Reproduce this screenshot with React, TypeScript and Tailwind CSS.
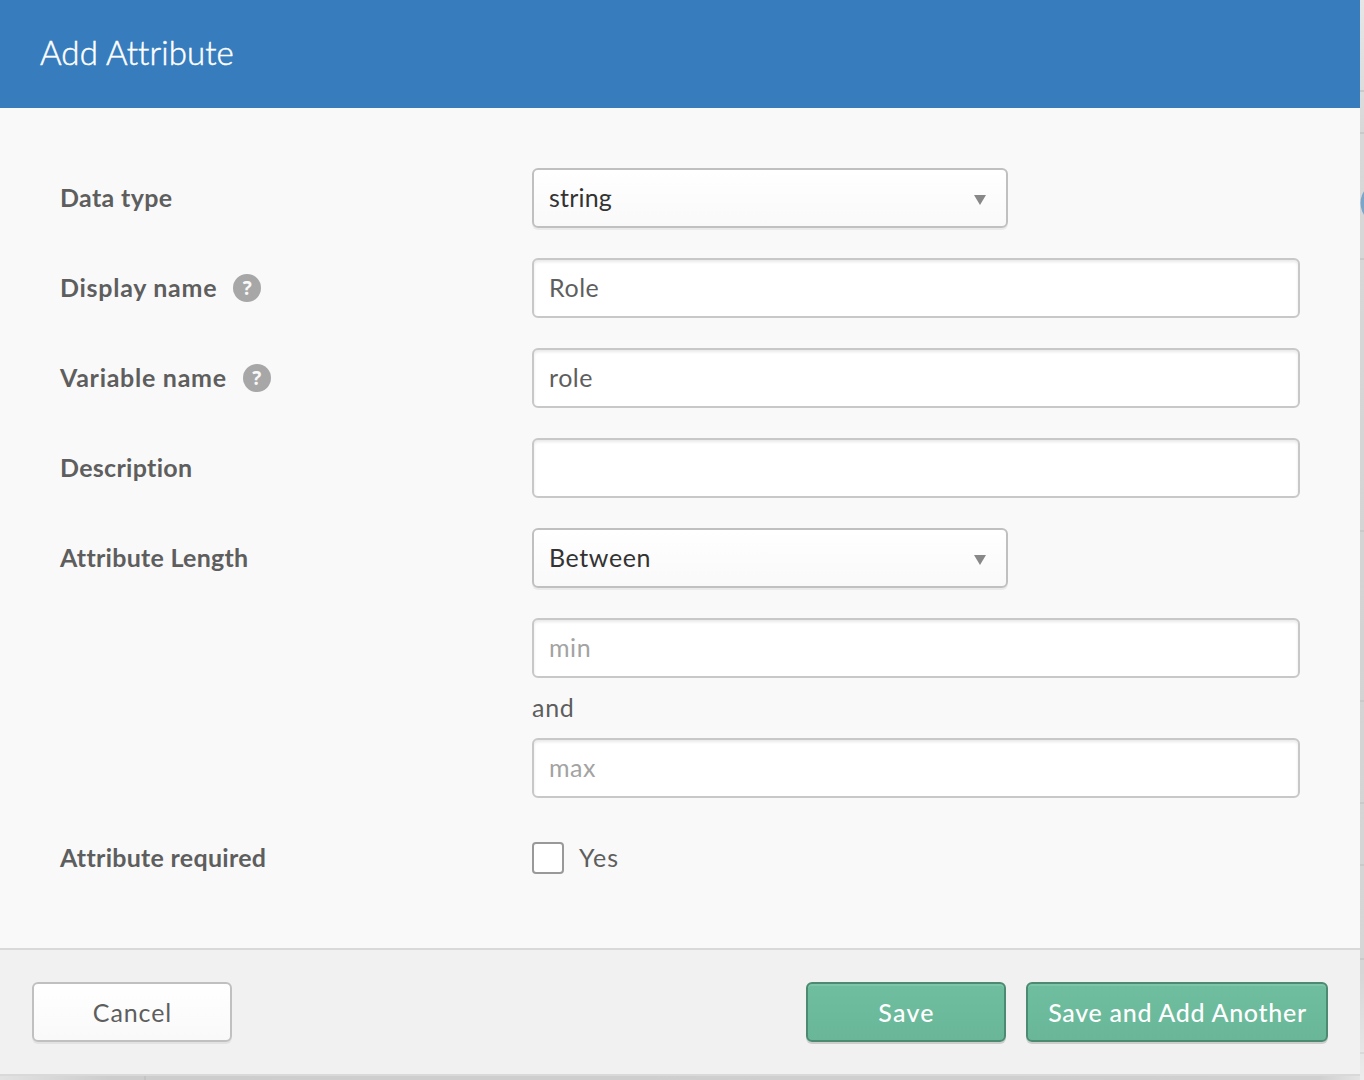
import React, { useState } from 'react';

interface RowProps {
  label: string;
  labelClass: string;
  help?: boolean;
  children: React.ReactNode;
}

const fieldClass =
  'block w-full h-[60px] rounded-[6px] border-2 border-[#c8c8c8] bg-white px-[15px] pb-[2px] text-[25px] tracking-[0.55px] text-[#5e5e5e] placeholder:text-[#a3a3a3] placeholder:opacity-100 shadow-[inset_0_2px_3px_rgba(0,0,0,0.09)] outline-none';

const greenButton =
  'h-[60px] rounded-[6px] border-2 border-[#4c8b72] bg-linear-to-b from-[#6ebe9f] to-[#69b798] pt-[2px] text-[25px] font-medium text-white whitespace-nowrap shadow-[0_2px_0_rgba(0,0,0,0.15),inset_0_2px_0_rgba(255,255,255,0.12)]';

function Row({ label, labelClass, help, children }: RowProps) {
  return (
    <div className="flex items-start">
      <div className="flex h-[60px] w-[472px] shrink-0 items-center gap-4 text-[25px] font-bold text-[#5e5e5e]">
        <span className={labelClass}>{label}</span>
        {help && (
          <span className="flex h-7 w-7 items-center justify-center rounded-full bg-[#a7a7a7] font-['Open_Sans',sans-serif] text-[19px] leading-none font-bold text-[#f9f9f9]">
            ?
          </span>
        )}
      </div>
      <div className="min-w-0 flex-1">{children}</div>
    </div>
  );
}

function Dropdown({ value, valueClass }: { value: string; valueClass: string }) {
  return (
    <button className="flex h-[60px] w-[476px] items-center justify-between rounded-[6px] border-2 border-[#c0c0c0] bg-linear-to-b from-white to-[#f9f9f9] pl-[15px] pr-5 text-[25px] text-[#333] shadow-[0_2px_0_rgba(0,0,0,0.06)]">
      <span className={valueClass}>{value}</span>
      <svg width="12" height="10" viewBox="0 0 12 10" className="mt-[3px]">
        <path d="M0 0h12L6 10z" fill="#888" />
      </svg>
    </button>
  );
}

export default function App() {
  const [displayName, setDisplayName] = useState('Role');
  const [variableName, setVariableName] = useState('role');
  const [description, setDescription] = useState('');
  const [required, setRequired] = useState(false);

  return (
    <div className="relative h-[1080px] w-[1364px] overflow-hidden bg-[#d5d5d5] font-['Lato',sans-serif] [font-variant-ligatures:none]">
      {/* edge of the page behind the dialog */}
      <svg width="1364" height="1080" className="absolute inset-0">
        <defs>
          <linearGradient id="side" x1="0" y1="0" x2="0" y2="1">
            <stop offset="0" stopColor="#e6e6e6" />
            <stop offset="0.12" stopColor="#d8d8d8" />
            <stop offset="0.6" stopColor="#d3d3d3" />
            <stop offset="0.9" stopColor="#d6d6d6" />
            <stop offset="1" stopColor="#ececec" />
          </linearGradient>
          <linearGradient id="bottom" x1="0" y1="0" x2="1" y2="0">
            <stop offset="0" stopColor="#e2e2e2" />
            <stop offset="0.08" stopColor="#cdcdcd" />
            <stop offset="0.97" stopColor="#d0d0d0" />
            <stop offset="1" stopColor="#e4e4e4" />
          </linearGradient>
        </defs>
        <rect x="1360" width="4" height="1080" fill="url(#side)" />
        <rect y="1074" width="1360" height="6" fill="url(#bottom)" />
        <path d="M1360 91h4M1360 133h4M1360 259h4M1360 531h4M1360 701h4M1360 803h4M1360 865h4M1360 959h4" stroke="#c9c9c9" strokeWidth="2" />
        <path d="M1360 1053h4" stroke="#d9d9d9" strokeWidth="2" />
        <path d="M145 1076v4" stroke="#c4c4c4" strokeWidth="2" />
        <circle cx="1382" cy="203" r="21.5" fill="#7ba5c9" />
      </svg>

      <div className="relative flex h-[1076px] w-[1360px] flex-col border-b-2 border-[#d9d9d9] bg-[#f9f9f9]">
        <header className="flex h-[108px] shrink-0 items-center bg-[#377dbd] px-10 pb-[3px]">
          <h1 className="text-[33px] font-light tracking-[0.1px] text-white [-webkit-text-stroke:0.5px_white]">Add Attribute</h1>
        </header>

        <main className="flex flex-1 flex-col gap-[30px] px-[60px] pt-[60px]">
          <Row label="Data type" labelClass="tracking-[0.35px]">
            <Dropdown value="string" valueClass="tracking-[0.2px]" />
          </Row>
          <Row label="Display name" labelClass="tracking-[0.72px]" help>
            <input className={fieldClass} value={displayName} onChange={e => setDisplayName(e.target.value)} />
          </Row>
          <Row label="Variable name" labelClass="tracking-[0.72px]" help>
            <input className={fieldClass} value={variableName} onChange={e => setVariableName(e.target.value)} />
          </Row>
          <Row label="Description" labelClass="tracking-[0.3px]">
            <input className={fieldClass} value={description} onChange={e => setDescription(e.target.value)} />
          </Row>
          <Row label="Attribute Length" labelClass="tracking-[0.27px]">
            <Dropdown value="Between" valueClass="tracking-[0.6px]" />
            <input className={`${fieldClass} mt-[30px]`} placeholder="min" />
            <p className="flex h-[60px] items-center text-[25px] tracking-[0.7px] text-[#5e5e5e]">and</p>
            <input className={fieldClass} placeholder="max" />
          </Row>
          <Row label="Attribute required" labelClass="tracking-[0.28px]">
            <label className="flex h-[60px] items-center gap-[15px] text-[25px] text-[#5e5e5e]">
              <input
                type="checkbox"
                checked={required}
                onChange={e => setRequired(e.target.checked)}
                className="h-8 w-8 appearance-none rounded-[4px] border-2 border-[#999] bg-white checked:bg-[#377dbd]"
              />
              <span className="tracking-[1.1px]">Yes</span>
            </label>
          </Row>
        </main>

        <footer className="flex h-[126px] shrink-0 items-start gap-5 border-t-2 border-[#d9d9d9] bg-[#f1f1f1] px-8 pt-8">
          <button className="mr-auto h-[60px] w-[200px] rounded-[6px] border-2 border-[#c0c0c0] bg-linear-to-b from-white to-[#f9f9f9] pt-[2px] pl-px text-[25px] tracking-[0.9px] text-[#5e5e5e] shadow-[0_2px_0_rgba(0,0,0,0.06)]">
            Cancel
          </button>
          <button className={`${greenButton} w-[200px] pl-px tracking-[1.2px]`}>Save</button>
          <button className={`${greenButton} w-[302px] pl-px tracking-[0.7px]`}>Save and Add Another</button>
        </footer>
      </div>
    </div>
  );
}
